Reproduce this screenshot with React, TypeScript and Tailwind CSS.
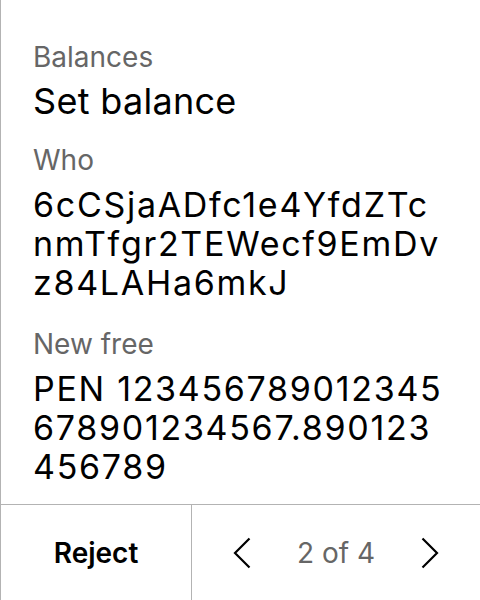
const who = ["6cCSjaADfc1e4YfdZTc", "nmTfgr2TEWecf9EmDv", "z84LAHa6mkJ"];
const amount = ["PEN 123456789012345", "678901234567.890123", "456789"];

function Label({ children, className = "" }: { children: React.ReactNode; className?: string }) {
  return <div className={`text-[28px] leading-[34px] text-[#666] ${className}`}>{children}</div>;
}

function Value({ lines }: { lines: string[] }) {
  return (
    <div className="mt-2 text-[34px] leading-[39px] tracking-[1.7px] whitespace-nowrap">
      {lines.map((l) => (
        <div key={l}>{l}</div>
      ))}
    </div>
  );
}

export default function App() {
  return (
    <div className="h-[600px] w-[480px] bg-white flex flex-col border-l border-[#b3b3b3] font-['Inter',sans-serif] text-black">
      <div className="flex-1 flex flex-col px-8 pt-[40px]">
        <Label>Balances</Label>
        <div className="mt-[7px] text-[36px] leading-[40px] tracking-[0.3px]">Set balance</div>

        <Label className="mt-[22px]">Who</Label>
        <Value lines={who} />

        <Label className="mt-[25px]">New free</Label>
        <Value lines={amount} />
      </div>

      <div className="h-24 flex border-t border-[#b3b3b3]">
        <button className="w-[191px] flex items-center justify-center text-[28px] font-semibold border-r border-[#b3b3b3]">
          Reject
        </button>
        <div className="flex-1 flex items-center justify-between px-[41px]">
          <svg width="18" height="32" viewBox="0 0 18 32" fill="none" stroke="black" strokeWidth="2.2">
            <path d="M16.5 1.5 L2 16 L16.5 30.5" />
          </svg>
          <span className="text-[28px] text-[#666]">2 of 4</span>
          <svg width="18" height="32" viewBox="0 0 18 32" fill="none" stroke="black" strokeWidth="2.2">
            <path d="M1.5 1.5 L16 16 L1.5 30.5" />
          </svg>
        </div>
      </div>
    </div>
  );
}
